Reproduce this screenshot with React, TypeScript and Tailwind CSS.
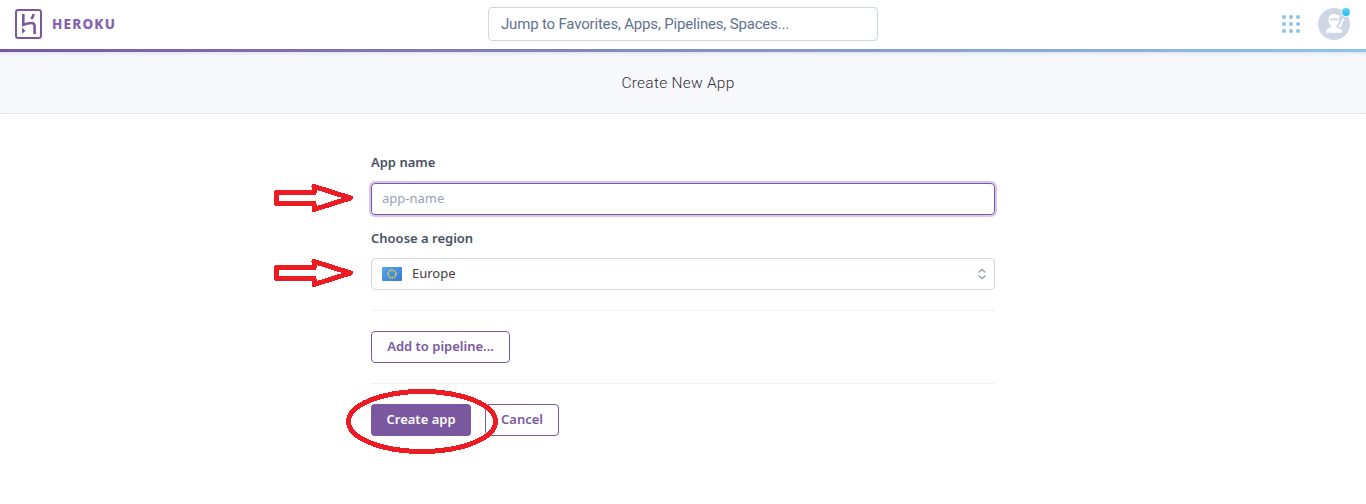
import React from "react";

function HerokuMark() {
  return (
    <svg width="27" height="30" viewBox="0 0 27 30" fill="none" stroke="#79589f">
      <rect x="1" y="1" width="25" height="28" rx="2.2" strokeWidth="2" />
      <path d="M8.300 5v10.800c3-1.200 5.700-1.800 8-1.800 2.400 0 3.300 1.200 3.300 3V25" strokeWidth="2.600" />
      <path d="M18.600 5c-.2 1.900-1 3.500-2.300 5" strokeWidth="2.600" />
      <path d="M7 18.800v6l3.500-3z" fill="#79589f" stroke="none" />
    </svg>
  );
}

function GridIcon() {
  return (
    <svg width="18" height="18" viewBox="0 0 18 18" fill="#8cc5e6">
      {[2, 9, 16].map((y) => [2, 9, 16].map((x) => <circle key={`${x}-${y}`} cx={x} cy={y} r="2" />))}
    </svg>
  );
}

function Avatar() {
  return (
    <svg width="34" height="34" viewBox="0 0 34 34">
      <defs>
        <linearGradient id="dot" x1="0" y1="0" x2="0" y2="1">
          <stop stopColor="#5fd3f7" />
          <stop offset="1" stopColor="#1ebcf2" />
        </linearGradient>
      </defs>
      <circle cx="16" cy="18" r="16" fill="#cfd7e6" />
      <g fill="#fff">
        <path d="M11 10.500c1-1.800 2.800-2.500 4.700-2.500 2 0 3.500.6 4.500 1.800l2.300-.8-1.500 2.500v3.300c0 2-1.300 3.500-2.600 4.400v2.300c2 .6 4 1.300 5.100 2.500.6.700.8 1.500.8 2.700H8v-1.200c0-2.500 2-3.200 4.800-4v-2.300c-1.500-1-2.300-2.600-2.300-4.700z" />
        <path d="m20.300 20.500 4.700-8 1.400.7-4.200 8.200z" />
      </g>
      <path d="M12 12.200h8v1.700c-.5.900-2.700 1.100-3.400 0h-1.200c-.7 1.100-2.900.9-3.400 0z" fill="#cfd7e6" />
      <path d="M13 12.900h1.800M17.200 12.900h1.800" stroke="#fff" strokeWidth=".7" />
      <circle cx="28" cy="6" r="4.800" fill="#fff" />
      <circle cx="28" cy="6" r="3.900" fill="url(#dot)" />
    </svg>
  );
}

function Arrow({ className }: { className: string }) {
  return (
    <svg className={`absolute ${className}`} width="82" height="32" viewBox="0 0 82 32" fill="none" shapeRendering="crispEdges">
      <path d="M4.500 9.500H42V3.500L78.500 15 42 26.500V20.500H4.500z" stroke="#ed1c24" strokeWidth="5" strokeLinejoin="round" />
    </svg>
  );
}

function EuFlag() {
  return (
    <svg width="20" height="14" viewBox="0 0 20 14">
      <defs>
        <linearGradient id="eu" x1="0" y1="0" x2="1" y2="1">
          <stop stopColor="#55a5ea" />
          <stop offset="1" stopColor="#3878dc" />
        </linearGradient>
      </defs>
      <rect width="20" height="14" rx="1" fill="url(#eu)" />
      <circle cx="10" cy="7" r="3.900" fill="none" stroke="#e3cb35" strokeWidth="1.700" strokeDasharray="1.700 .75" />
    </svg>
  );
}

export default function App() {
  return (
    <div className="relative h-[504px] overflow-hidden bg-white font-['Noto_Sans',sans-serif] text-[13px] text-[#3f3f44]">
      <header className="grid h-[49px] grid-cols-[1fr_390px_1fr] items-start">
        <div className="flex items-center gap-[10px] pt-[9px] pl-[15px]">
          <HerokuMark />
          <span className="pt-px text-[13.5px] font-extrabold tracking-[1.2px] text-[#8562ab]">HEROKU</span>
        </div>
        <div className="mt-[7px] flex h-[34px] items-center rounded-[4px] border border-[#cfd7e6] pl-3 font-[Roboto,sans-serif] text-[15px] text-[#62738d]">
          <span className="pt-px tracking-[-0.18px]">Jump to Favorites, Apps, Pipelines, Spaces...</span>
        </div>
        <div className="flex justify-end gap-[18px] pt-[6px] pr-[14px]">
          <div className="pt-[9px]"><GridIcon /></div>
          <Avatar />
        </div>
      </header>
      <div className="h-[3px] bg-linear-to-r from-[#79589f] to-[#8cc5e6]" />
      <div className="flex h-[62px] items-center justify-center border-b border-[#e3e8f0] bg-[#f7f8fc] pr-[10px] shadow-[inset_0_4px_4px_-3px_#d9dde8]">
        <h1 className="pt-0.5 font-[Roboto,sans-serif] text-[15.5px] font-light tracking-[0.25px] text-[#2f2f35]">Create New App</h1>
      </div>
      <main className="mx-auto flex w-[624px] flex-col items-stretch">
        <label className="mt-[38px] h-5 font-semibold leading-5 text-[#475163]">App name</label>
        <div className="mt-[11px] flex h-8 items-center rounded-[4px] border border-[#79589f] pb-px pl-[10px] text-[#96a3b6] shadow-[0_0_0_2px_#d9c5ec]">app-name</div>
        <label className="mt-[13px] h-5 font-semibold leading-5 text-[#475163]">Choose a region</label>
        <div className="mt-[10px] flex h-8 items-center rounded-[4px] border border-[#cfd7e6] pr-[7px] pl-[10px]">
          <EuFlag />
          <span className="ml-[10px] flex-1">Europe</span>
          <svg width="10" height="12" viewBox="0 0 10 12" fill="none" stroke="#96a3b6" strokeWidth="1.500"><path d="M1.500 4.500 5 1.500l3.500 3M1.500 7.500l3.500 3 3.500-3" /></svg>
        </div>
        <hr className="mt-5 border-[#edf0f5]" />
        <button className="mt-5 h-8 w-[139px] rounded-[4px] border border-[#79589f] font-semibold text-[#79589f]">Add to pipeline...</button>
        <hr className="mt-5 border-[#edf0f5]" />
        <div className="mt-5 flex gap-[14px] font-semibold">
          <button className="h-8 w-[100px] rounded-[4px] bg-[#79589f] text-white">Create app</button>
          <button className="h-8 w-[74px] rounded-[4px] border border-[#79589f] text-[#79589f]">Cancel</button>
        </div>
      </main>
      <Arrow className="top-[183px] left-[272px]" />
      <Arrow className="top-[258px] left-[272px]" />
      <svg className="absolute top-[386px] left-[344px]" width="156" height="70" viewBox="0 0 156 70" shapeRendering="crispEdges">
        <ellipse cx="78" cy="35.500" rx="73.500" ry="30" fill="none" stroke="#ed1c24" strokeWidth="5" />
      </svg>
    </div>
  );
}
